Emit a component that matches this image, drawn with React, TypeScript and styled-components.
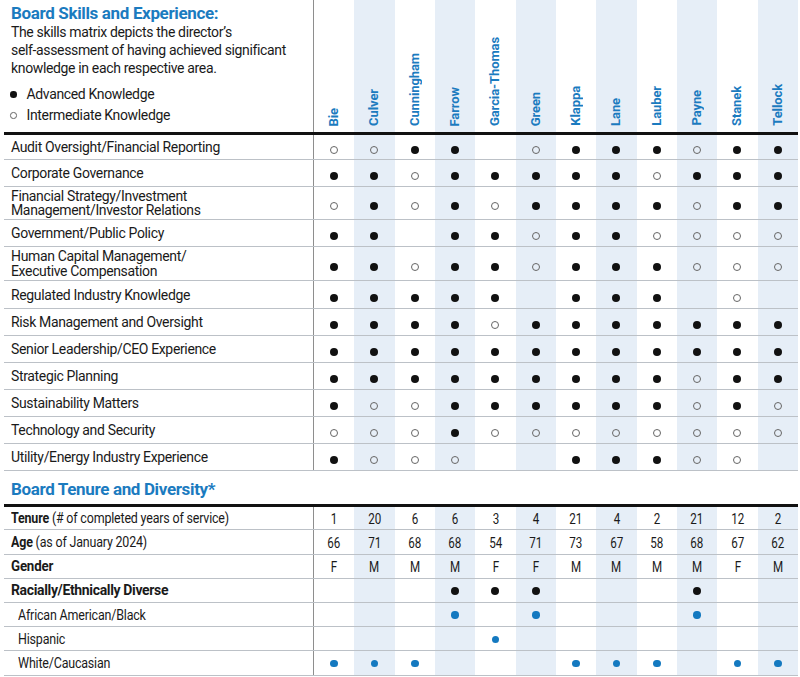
import React from "react";
import styled, { createGlobalStyle } from "styled-components";

const BLUE = "#1b7bbf";

const directors = [
  "Bie",
  "Culver",
  "Cunningham",
  "Farrow",
  "Garcia-Thomas",
  "Green",
  "Klappa",
  "Lane",
  "Lauber",
  "Payne",
  "Stanek",
  "Tellock",
];

// A = advanced, I = intermediate, - = none
const skills = [
  { name: "Audit Oversight/Financial Reporting", marks: "IIAA-IAAAIAA", h: 25 },
  { name: "Corporate Governance", marks: "AAIAAAAAIAAA", h: 27.1 },
  { name: "Financial Strategy/Investment Management/Investor Relations", marks: "IAIAIAAAAIAA", h: 33, wrap: true },
  { name: "Government/Public Policy", marks: "AA-AAIAAIIII", h: 27.1 },
  { name: "Human Capital Management/ Executive Compensation", marks: "AAIAAIAAAIII", h: 34.3, wrap: true },
  { name: "Regulated Industry Knowledge", marks: "AAAAA-AAA-I-", h: 27.1 },
  { name: "Risk Management and Oversight", marks: "AAAAIAAAAAAA", h: 27.1 },
  { name: "Senior Leadership/CEO Experience", marks: "AAAAAAAAAAAA", h: 27.1 },
  { name: "Strategic Planning", marks: "AAAAAAAAAIAA", h: 27.1 },
  { name: "Sustainability Matters", marks: "AIIAAAAAAIAI", h: 27.1 },
  { name: "Technology and Security", marks: "IIIAIIIIIIII", h: 27.1 },
  { name: "Utility/Energy Industry Experience", marks: "AIII--AAAII-", h: 27.1 },
];

const facts = [
  {
    key: "Tenure",
    rest: "(# of completed years of service)",
    values: ["1", "20", "6", "6", "3", "4", "21", "4", "2", "21", "12", "2"],
    h: 23.3,
    squeeze: 0.89,
  },
  {
    key: "Age",
    rest: "(as of January 2024)",
    values: ["66", "71", "68", "68", "54", "71", "73", "67", "58", "68", "67", "62"],
    h: 24.2,
    squeeze: 0.89,
  },
  { key: "Gender", rest: "", values: "FMMMFFMMMMFM".split(""), h: 24.2, squeeze: 0.95 },
];

const diversity = [
  { name: "African American/Black", marks: "---B-B---B--" },
  { name: "Hispanic", marks: "----B-------" },
  { name: "White/Caucasian", marks: "BBB---BBB-BB" },
];

const GlobalStyle = createGlobalStyle`
  body {
    margin: 0;
    background: #ffffff;
    color: #1a1a1a;
    font-family: Roboto, "Liberation Sans", sans-serif;
  }
`;

function Dot({ kind }: { kind: string }) {
  if (kind === "A") return <Mark $kind="full" />;
  if (kind === "I") return <Mark $kind="open" />;
  if (kind === "B") return <Mark $kind="blue" />;
  return null;
}

export default function App() {
  return (
    <>
      <GlobalStyle />
      <Sheet>
        <HeadRow>
          <Intro>
            <Title>Board Skills and Experience:</Title>
            <Blurb>
              The skills matrix depicts the director’s
              <br />
              self-assessment of having achieved significant
              <br />
              knowledge in each respective area.
            </Blurb>
            <Legend>
              <LegendItem>
                <Mark $kind="legendFull" />
                Advanced Knowledge
              </LegendItem>
              <LegendItem>
                <Mark $kind="legendOpen" />
                Intermediate Knowledge
              </LegendItem>
            </Legend>
          </Intro>
          {directors.map((d, i) => (
            <NameCell key={d} $shade={i % 2 === 1}>
              <Name>{d}</Name>
            </NameCell>
          ))}
        </HeadRow>
        <ThickRule />
        {skills.map((s) => (
          <Row key={s.name} $h={s.h}>
            <Label>{s.wrap ? <Wrapped>{s.name}</Wrapped> : s.name}</Label>
            {s.marks.split("").map((m, i) => (
              <Cell key={i} $shade={i % 2 === 1} $drop={6}>
                <Dot kind={m} />
              </Cell>
            ))}
          </Row>
        ))}
        <SectionTitle>Board Tenure and Diversity*</SectionTitle>
        <ThickRule />
        {facts.map((f) => (
          <Row key={f.key} $h={f.h}>
            <Label>
              <Squeeze $x={f.squeeze}>
                <Strong>{f.key}</Strong>
                {f.rest ? " " + f.rest : ""}
              </Squeeze>
            </Label>
            {f.values.map((v, i) => (
              <Cell key={i} $shade={i % 2 === 1} $drop={1}>
                <Value>{v}</Value>
              </Cell>
            ))}
          </Row>
        ))}
        <Row $h={24.2}>
          <Label>
            <Strong>Racially/Ethnically Diverse</Strong>
          </Label>
          {"---AAA---A--".split("").map((m, i) => (
            <Cell key={i} $shade={i % 2 === 1} $drop={1}>
              <Dot kind={m} />
            </Cell>
          ))}
        </Row>
        {diversity.map((r) => (
          <Row key={r.name} $h={24.2}>
            <Label $indent>
              <Squeeze $x={0.89}>{r.name}</Squeeze>
            </Label>
            {r.marks.split("").map((m, i) => (
              <Cell key={i} $shade={i % 2 === 1} $drop={1}>
                <Dot kind={m} />
              </Cell>
            ))}
          </Row>
        ))}
      </Sheet>
    </>
  );
}

const Sheet = styled.div`
  width: 794px;
  margin-left: 4px;
  font-size: 14px;
  letter-spacing: -0.35px;
`;

const HeadRow = styled.div`
  display: grid;
  grid-template-columns: 310px repeat(12, 1fr);
  height: 132px;
`;

const Intro = styled.div`
  border-right: 1px solid #8e8e8e;
  padding: 3px 0 0 7px;
`;

const Title = styled.div`
  color: ${BLUE};
  font-size: 17px;
  font-weight: 700;
  line-height: 20px;
  letter-spacing: -0.35px;
`;

const Blurb = styled.div`
  line-height: 18px;
`;

const Legend = styled.div`
  margin-top: 7px;
`;

const LegendItem = styled.div`
  display: flex;
  align-items: center;
  gap: 10px;
  line-height: 21px;
  margin-left: -1px;
`;

const NameCell = styled.div<{ $shade: boolean }>`
  background: ${(p) => (p.$shade ? "#e6eef7" : "transparent")};
  display: flex;
  align-items: flex-end;
  justify-content: center;
  padding-bottom: 6px;
`;

const Name = styled.span`
  writing-mode: vertical-rl;
  transform: rotate(180deg);
  color: ${BLUE};
  font-size: 13px;
  font-weight: 700;
  letter-spacing: -0.1px;
  line-height: 16px;
`;

const ThickRule = styled.div`
  height: 3px;
  background: #111111;
`;

const Row = styled.div<{ $h: number }>`
  display: grid;
  grid-template-columns: 310px repeat(12, 1fr);
  height: ${(p) => p.$h}px;
  box-sizing: border-box;
  border-bottom: 1px solid #bcc1c7;
`;

const Label = styled.div<{ $indent?: boolean }>`
  display: flex;
  align-items: center;
  padding-left: ${(p) => (p.$indent ? 14 : 7)}px;
  border-right: 1px solid #8e8e8e;
  white-space: nowrap;
`;

const Squeeze = styled.span<{ $x: number }>`
  display: inline-block;
  white-space: pre;
  letter-spacing: -0.2px;
  transform: scaleX(${(p) => p.$x});
  transform-origin: left center;
`;

const Wrapped = styled.span`
  white-space: normal;
  line-height: 14.5px;
  max-width: 230px;
`;

const Strong = styled.span`
  font-weight: 700;
`;

const Cell = styled.div<{ $shade: boolean; $drop: number }>`
  background: ${(p) => (p.$shade ? "#e6eef7" : "transparent")};
  display: flex;
  align-items: center;
  justify-content: center;
  padding-top: ${(p) => p.$drop}px;
  box-sizing: border-box;
`;

const Value = styled.span`
  display: inline-block;
  letter-spacing: -0.2px;
  transform: scaleX(0.83);
`;

const Mark = styled.span<{ $kind: string }>`
  display: inline-block;
  flex: none;
  box-sizing: border-box;
  border-radius: 50%;
  width: ${(p) => (p.$kind.startsWith("legend") ? 6.5 : p.$kind === "blue" ? 7.4 : 8)}px;
  height: ${(p) => (p.$kind.startsWith("legend") ? 6.5 : p.$kind === "blue" ? 7.4 : 8)}px;
  background: ${(p) =>
    p.$kind === "full" || p.$kind === "legendFull"
      ? "#111111"
      : p.$kind === "blue"
      ? "#1479c0"
      : "transparent"};
  border: ${(p) =>
    p.$kind === "open" || p.$kind === "legendOpen" ? "1.5px solid #666666" : "none"};
`;

const SectionTitle = styled.div`
  color: ${BLUE};
  font-size: 17px;
  font-weight: 700;
  line-height: 20px;
  letter-spacing: -0.35px;
  padding-left: 7px;
  margin: 8px 0 5px;
`;
